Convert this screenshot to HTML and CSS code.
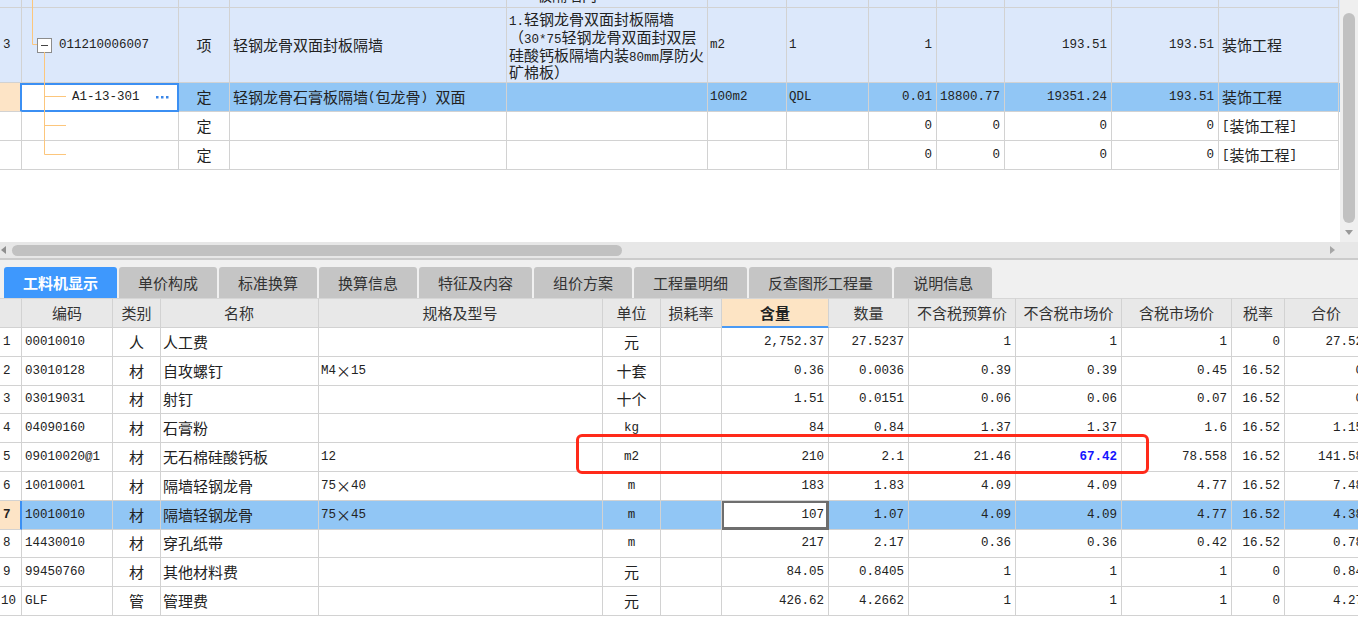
FILE: index.html
```html
<!DOCTYPE html>
<html lang="zh">
<head>
<meta charset="utf-8">
<title>工料机显示</title>
<link rel="stylesheet" href="styles.css">
</head>
<body>
<div class="app">
  <div class="upper">
    <div class="grid-area">
      <div class="utable">
        <div class="urow peek lb">
          <div class="c num"></div><div class="c"></div><div class="c"></div><div class="c"></div>
          <div class="c desc top"><span class="peektext">板隔墙内</span></div>
          <div class="c"></div><div class="c"></div><div class="c"></div><div class="c"></div><div class="c"></div><div class="c"></div><div class="c"></div>
        </div>
        <div class="urow tall lb">
          <div class="c num m">3</div>
          <div class="c code"><span class="exp"></span><span class="m">011210006007</span></div>
          <div class="c ctr">项</div>
          <div class="c">轻钢龙骨双面封板隔墙</div>
          <div class="c desc"><div class="desc-text"><span class="m">1.</span>轻钢龙骨双面封板隔墙<br>（<span class="m">30*75</span>轻钢龙骨双面封双层<br>硅酸钙板隔墙内装<span class="m">80mm</span>厚防火<br>矿棉板）</div></div>
          <div class="c m">m2</div>
          <div class="c m">1</div>
          <div class="c m r">1</div>
          <div class="c"></div>
          <div class="c m r">193.51</div>
          <div class="c m r">193.51</div>
          <div class="c">装饰工程</div>
        </div>
        <div class="urow sel">
          <div class="c num peach"></div>
          <div class="c code selcell"><span class="m">A1-13-301</span><svg class="dots" width="13" height="3" viewBox="0 0 13 3"><rect x="0" y="0" width="2.5" height="2.5"/><rect x="5" y="0" width="2.5" height="2.5"/><rect x="10" y="0" width="2.5" height="2.5"/></svg></div>
          <div class="c ctr">定</div>
          <div class="c">轻钢龙骨石膏板隔墙<span class="m">(</span>包龙骨<span class="m">)&nbsp;</span>双面</div>
          <div class="c"></div>
          <div class="c m">100m2</div>
          <div class="c m">QDL</div>
          <div class="c m r">0.01</div>
          <div class="c m r">18800.77</div>
          <div class="c m r">19351.24</div>
          <div class="c m r">193.51</div>
          <div class="c">装饰工程</div>
        </div>
        <div class="urow">
          <div class="c num"></div><div class="c"></div><div class="c ctr">定</div><div class="c"></div><div class="c"></div><div class="c"></div><div class="c"></div>
          <div class="c m r">0</div><div class="c m r">0</div><div class="c m r">0</div><div class="c m r">0</div>
          <div class="c"><span class="m">[</span>装饰工程<span class="m">]</span></div>
        </div>
        <div class="urow">
          <div class="c num"></div><div class="c"></div><div class="c ctr">定</div><div class="c"></div><div class="c"></div><div class="c"></div><div class="c"></div>
          <div class="c m r">0</div><div class="c m r">0</div><div class="c m r">0</div><div class="c m r">0</div>
          <div class="c"><span class="m">[</span>装饰工程<span class="m">]</span></div>
        </div>
      </div>
      <svg class="tree" width="80" height="170" viewBox="0 0 80 170">
        <path d="M32.5 0 V44.5 H37" />
        <path d="M44.5 52 V154.5" />
        <path d="M44.5 96.5 H66" />
        <path d="M44.5 125.5 H66" />
        <path d="M44.5 154.5 H66" />
      </svg>
    </div>
    <div class="vscroll">
      <div class="vthumb"></div>
      <div class="varrow"></div>
    </div>
  </div>
  <div class="hscroll">
    <div class="harrow-l"></div>
    <div class="hthumb"></div>
    <div class="hspace"></div>
    <div class="harrow-r"></div>
  </div>
  <div class="sep"></div>
  <div class="tabbar">
    <div class="tab active">工料机显示</div>
    <div class="tab">单价构成</div>
    <div class="tab">标准换算</div>
    <div class="tab">换算信息</div>
    <div class="tab">特征及内容</div>
    <div class="tab">组价方案</div>
    <div class="tab">工程量明细</div>
    <div class="tab">反查图形工程量</div>
    <div class="tab">说明信息</div>
  </div>
  <div class="ltable">
    <div class="lrow head">
      <div class="c"></div><div class="c ctr">编码</div><div class="c ctr">类别</div><div class="c ctr">名称</div><div class="c ctr">规格及型号</div><div class="c ctr">单位</div><div class="c ctr">损耗率</div><div class="c ctr hl">含量</div><div class="c ctr">数量</div><div class="c ctr">不含税预算价</div><div class="c ctr">不含税市场价</div><div class="c ctr">含税市场价</div><div class="c ctr">税率</div><div class="c ctr">合价</div>
    </div>
    <div class="lrow">
      <div class="c num m">1</div><div class="c m">00010010</div><div class="c ctr">人</div><div class="c">人工费</div><div class="c m"></div><div class="c ctr">元</div><div class="c"></div><div class="c m r">2,752.37</div><div class="c m r">27.5237</div><div class="c m r">1</div><div class="c m r">1</div><div class="c m r">1</div><div class="c m r">0</div><div class="c m r">27.52</div>
    </div>
    <div class="lrow">
      <div class="c num m">2</div><div class="c m">03010128</div><div class="c ctr">材</div><div class="c">自攻螺钉</div><div class="c m">M4<span class="x">×</span>15</div><div class="c ctr">十套</div><div class="c"></div><div class="c m r">0.36</div><div class="c m r">0.0036</div><div class="c m r">0.39</div><div class="c m r">0.39</div><div class="c m r">0.45</div><div class="c m r">16.52</div><div class="c m r">0</div>
    </div>
    <div class="lrow">
      <div class="c num m">3</div><div class="c m">03019031</div><div class="c ctr">材</div><div class="c">射钉</div><div class="c m"></div><div class="c ctr">十个</div><div class="c"></div><div class="c m r">1.51</div><div class="c m r">0.0151</div><div class="c m r">0.06</div><div class="c m r">0.06</div><div class="c m r">0.07</div><div class="c m r">16.52</div><div class="c m r">0</div>
    </div>
    <div class="lrow">
      <div class="c num m">4</div><div class="c m">04090160</div><div class="c ctr">材</div><div class="c">石膏粉</div><div class="c m"></div><div class="c ctr m">kg</div><div class="c"></div><div class="c m r">84</div><div class="c m r">0.84</div><div class="c m r">1.37</div><div class="c m r">1.37</div><div class="c m r">1.6</div><div class="c m r">16.52</div><div class="c m r">1.15</div>
    </div>
    <div class="lrow">
      <div class="c num m">5</div><div class="c m">09010020@1</div><div class="c ctr">材</div><div class="c">无石棉硅酸钙板</div><div class="c m">12</div><div class="c ctr m">m2</div><div class="c"></div><div class="c m r">210</div><div class="c m r">2.1</div><div class="c m r">21.46</div><div class="c m r blue">67.42</div><div class="c m r">78.558</div><div class="c m r">16.52</div><div class="c m r">141.58</div>
    </div>
    <div class="lrow">
      <div class="c num m">6</div><div class="c m">10010001</div><div class="c ctr">材</div><div class="c">隔墙轻钢龙骨</div><div class="c m">75<span class="x">×</span>40</div><div class="c ctr m">m</div><div class="c"></div><div class="c m r">183</div><div class="c m r">1.83</div><div class="c m r">4.09</div><div class="c m r">4.09</div><div class="c m r">4.77</div><div class="c m r">16.52</div><div class="c m r">7.48</div>
    </div>
    <div class="lrow sel">
      <div class="c num m peach bold selnum">7</div><div class="c m">10010010</div><div class="c ctr">材</div><div class="c">隔墙轻钢龙骨</div><div class="c m">75<span class="x">×</span>45</div><div class="c ctr m">m</div><div class="c"></div><div class="c m r edit">107</div><div class="c m r">1.07</div><div class="c m r">4.09</div><div class="c m r">4.09</div><div class="c m r">4.77</div><div class="c m r">16.52</div><div class="c m r">4.38</div>
    </div>
    <div class="lrow">
      <div class="c num m">8</div><div class="c m">14430010</div><div class="c ctr">材</div><div class="c">穿孔纸带</div><div class="c m"></div><div class="c ctr m">m</div><div class="c"></div><div class="c m r">217</div><div class="c m r">2.17</div><div class="c m r">0.36</div><div class="c m r">0.36</div><div class="c m r">0.42</div><div class="c m r">16.52</div><div class="c m r">0.78</div>
    </div>
    <div class="lrow">
      <div class="c num m">9</div><div class="c m">99450760</div><div class="c ctr">材</div><div class="c">其他材料费</div><div class="c m"></div><div class="c ctr">元</div><div class="c"></div><div class="c m r">84.05</div><div class="c m r">0.8405</div><div class="c m r">1</div><div class="c m r">1</div><div class="c m r">1</div><div class="c m r">0</div><div class="c m r">0.84</div>
    </div>
    <div class="lrow">
      <div class="c num m wide">10</div><div class="c m">GLF</div><div class="c ctr">管</div><div class="c">管理费</div><div class="c m"></div><div class="c ctr">元</div><div class="c"></div><div class="c m r">426.62</div><div class="c m r">4.2662</div><div class="c m r">1</div><div class="c m r">1</div><div class="c m r">1</div><div class="c m r">0</div><div class="c m r">4.27</div>
    </div>
  </div>
  <div class="redbox"></div>
</div>
</body>
</html>
```

FILE: styles.css
```css
* { box-sizing: border-box; }
html, body { margin: 0; padding: 0; overflow: hidden; background: #fff; }
body {
  width: 1358px;
  height: 642px;
  font-family: "Noto Sans CJK SC", sans-serif;
  font-size: 15px;
  color: #222;
}
.app { position: relative; width: 1358px; height: 642px; overflow: hidden; }

/* generic cell */
.c {
  display: flex;
  align-items: center;
  padding: 0 3px;
  border-right: 1px solid #d2d2d2;
  border-bottom: 1px solid #d2d2d2;
  white-space: nowrap;
  overflow: hidden;
  line-height: 18px;
}
.m { font-family: "Liberation Mono", "Noto Sans CJK SC", monospace; font-size: 12.5px; }
.r { justify-content: flex-end; padding-right: 4px; }
.ctr { justify-content: center; }
.num { padding-left: 3px; }
.bold { font-weight: bold; }
.peach { background: #fde4c6; }

/* upper grid */
.upper { display: flex; height: 242px; }
.grid-area { position: relative; width: 1340px; background: #fff; overflow: hidden; }
.urow {
  display: grid;
  grid-template-columns: 22px 157px 51px 277px 201px 79px 82px 68px 68px 107px 107px 120px;
  height: 29px;
}
.urow.peek { height: 8px; }
.urow.tall { height: 75px; }
.urow.lb { background: #dce8fb; }
.urow.sel { background: #91c6f5; }
.urow .c:nth-child(n+4) { padding-left: 3px; }
.urow .c:nth-child(5), .urow .c:nth-child(6), .urow .c:nth-child(7) { padding-left: 2px; }
.urow .r { padding-right: 4px; }
.desc-text { line-height: 17.7px; padding-top: 1px; }
.desc-text .m { line-height: 0; }
.c.top { align-items: flex-start; }
.peektext { display: block; margin-top: -14px; padding-left: 28px; line-height: 18px; }
.code { padding-left: 15px; }
.exp {
  width: 15px;
  height: 15px;
  margin-right: 7px;
  border: 1px solid #8c8c8c;
  background: #fff linear-gradient(#444, #444) no-repeat center / 7px 1px;
  flex: none;
}
.urow.sel .num { border-right: 2px solid #3b8ff3; }
.selcell {
  background: #fff;
  padding-left: 50px;
  padding-right: 9px;
  border-right-color: #3b8ff3;
  border-bottom-color: #3b8ff3;
  box-shadow: inset 0 2px #3b8ff3, inset -1px 0 #3b8ff3, inset 0 -1px #3b8ff3;
}
.dots { margin-left: auto; fill: #3a86e8; }
.tree { position: absolute; left: 0; top: 0; pointer-events: none; fill: none; stroke: #fcc67c; stroke-width: 1; }

/* scrollbars */
.vscroll {
  width: 18px;
  background: #efefef;
  display: flex;
  flex-direction: column;
  align-items: center;
  padding-top: 13px;
}
.vthumb { width: 12px; height: 210px; border-radius: 6px; background: #c1c1c1; }
.varrow {
  margin-top: 7px;
  width: 0; height: 0;
  border-left: 4px solid transparent;
  border-right: 4px solid transparent;
  border-top: 5px solid #9a9a9a;
}
.hscroll {
  display: flex;
  align-items: center;
  height: 16px;
  background: #e7e7e7;
}
.harrow-l {
  margin-left: 1px;
  width: 0; height: 0;
  border-top: 4px solid transparent;
  border-bottom: 4px solid transparent;
  border-right: 5px solid #8f8f8f;
}
.hthumb { margin-left: 6px; width: 610px; height: 11px; border-radius: 6px; background: #c1c1c1; }
.hspace { flex: 1; }
.harrow-r {
  margin-right: 23px;
  width: 0; height: 0;
  border-top: 4px solid transparent;
  border-bottom: 4px solid transparent;
  border-left: 5px solid #a6a6a6;
}
.sep { height: 2px; background: #cbcbcb; }

/* tabs */
.tabbar {
  display: flex;
  align-items: flex-end;
  gap: 2px;
  height: 38px;
  padding-left: 4px;
  background: #f0f0f0;
}
.tab {
  height: 31px;
  line-height: 31px;
  padding: 0 19px;
  background: #c5c5c5;
  color: #333;
  border-radius: 3px 3px 0 0;
  white-space: nowrap;
}
.tab.active { background: #3e98fd; color: #fff; font-weight: bold; }

/* lower grid */
.ltable { width: 1368px; }
.lrow {
  display: grid;
  grid-template-columns: 22px 91px 48px 158px 284px 58px 61px 107px 80px 107px 106px 110px 53px 83px;
  height: 28.8px;
}
.lrow.head { height: 30px; background: #e8e8e8; color: #333; }
.lrow.head .c { border-top: 1px solid #d6d6d6; }
.lrow.head .hl {
  background: #fde4c4;
  font-weight: bold;
  color: #222;
  border-bottom-color: #4a9af5;
  box-shadow: inset 0 -1px #4a9af5;
}
.lrow .c:nth-child(4) { padding-left: 2px; }
.lrow .c:nth-child(5) { padding-left: 2px; }
.lrow .num.wide { padding-left: 1px; }
.lrow.sel { background: #91c6f5; }
.lrow.sel .selnum { border-right: 2px solid #3b8ff3; }
.edit { background: #fff; box-shadow: inset 0 0 0 2px #6e6e6e; border-color: #6e6e6e; }
.blue { color: #1515ff; font-weight: bold; }
.x { display: inline-block; width: 15px; text-align: center; font-family: "Noto Sans CJK SC", sans-serif; font-size: 15px; line-height: 0; }

/* annotation */
.redbox {
  position: absolute;
  left: 576px;
  top: 434px;
  width: 573px;
  height: 40px;
  border: 3px solid #ff2a1a;
  border-radius: 6px;
  pointer-events: none;
}
```
